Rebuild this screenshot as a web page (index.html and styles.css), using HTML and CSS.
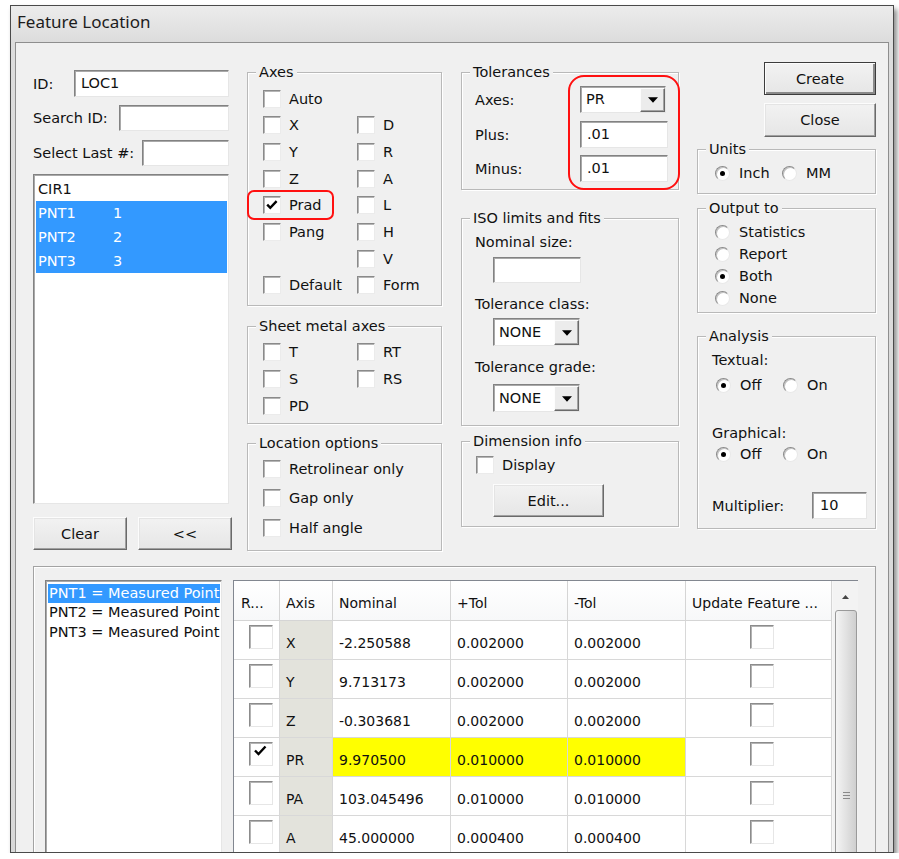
FILE: index.html
```html
<!DOCTYPE html>
<html>
<head>
<meta charset="utf-8">
<title>Feature Location</title>
<link rel="stylesheet" href="styles.css">
</head>
<body>
<div class="window">
  <div class="titlebar">Feature Location</div>
  <div class="client">
    <div class="top">
      <!-- ID / search / feature list -->
      <div class="col col-left">
        <div class="frow r1"><span class="lbl">ID:</span><span class="edit w-id">LOC1</span></div>
        <div class="frow r2"><span class="lbl">Search ID:</span><span class="edit w-search"></span></div>
        <div class="frow r3"><span class="lbl">Select Last #:</span><span class="edit w-last"></span></div>
        <div class="listbox feat-list">
          <div class="li"><span class="li-name">CIR1</span></div>
          <div class="li sel"><span class="li-name">PNT1</span><span>1</span></div>
          <div class="li sel"><span class="li-name">PNT2</span><span>2</span></div>
          <div class="li sel"><span class="li-name">PNT3</span><span>3</span></div>
        </div>
        <div class="btnrow">
          <button class="btn w-half">Clear</button>
          <button class="btn w-half">&lt;&lt;</button>
        </div>
      </div>

      <!-- axis selection -->
      <div class="col col-axes">
        <div class="group g-axes">
          <div class="gtitle">Axes</div>
          <div class="cbgrid rows-axes">
            <label class="cbi"><span class="cb"></span>Auto</label><span></span>
            <label class="cbi"><span class="cb"></span>X</label><label class="cbi"><span class="cb"></span>D</label>
            <label class="cbi"><span class="cb"></span>Y</label><label class="cbi"><span class="cb"></span>R</label>
            <label class="cbi"><span class="cb"></span>Z</label><label class="cbi"><span class="cb"></span>A</label>
            <label class="cbi"><span class="cb"><svg viewBox="0 0 16 16" class="tick"><path d="M3.2 7.6 L6.3 10.8 L12.6 4.2"/></svg></span>Prad</label><label class="cbi"><span class="cb"></span>L</label>
            <label class="cbi"><span class="cb"></span>Pang</label><label class="cbi"><span class="cb"></span>H</label>
            <span></span><label class="cbi"><span class="cb"></span>V</label>
            <label class="cbi"><span class="cb"></span>Default</label><label class="cbi"><span class="cb"></span>Form</label>
          </div>
        </div>
        <div class="group g-sheet">
          <div class="gtitle">Sheet metal axes</div>
          <div class="cbgrid rows-sheet">
            <label class="cbi"><span class="cb"></span>T</label><label class="cbi"><span class="cb"></span>RT</label>
            <label class="cbi"><span class="cb"></span>S</label><label class="cbi"><span class="cb"></span>RS</label>
            <label class="cbi"><span class="cb"></span>PD</label><span></span>
          </div>
        </div>
        <div class="group g-loc">
          <div class="gtitle">Location options</div>
          <div class="cblist rows-loc">
            <label class="cbi"><span class="cb"></span>Retrolinear only</label>
            <label class="cbi"><span class="cb"></span>Gap only</label>
            <label class="cbi"><span class="cb"></span>Half angle</label>
          </div>
        </div>
      </div>

      <!-- tolerances -->
      <div class="col col-tol">
        <div class="group g-tol">
          <div class="gtitle">Tolerances</div>
          <div class="tolrow t1"><span class="tlbl">Axes:</span><span class="combo w-axcombo"><span class="combo-val">PR</span><span class="combo-btn"><svg viewBox="0 0 9 5" class="arrow"><path d="M0 0 H9 L4.5 5 Z"/></svg></span></span></div>
          <div class="tolrow t2"><span class="tlbl">Plus:</span><span class="edit w-tol">.01</span></div>
          <div class="tolrow t3"><span class="tlbl">Minus:</span><span class="edit w-tol">.01</span></div>
        </div>
        <div class="group g-iso">
          <div class="gtitle">ISO limits and fits</div>
          <div class="iso-lbl l1">Nominal size:</div>
          <span class="edit w-nom"></span>
          <div class="iso-lbl l2">Tolerance class:</div>
          <span class="combo w-none c1"><span class="combo-val">NONE</span><span class="combo-btn"><svg viewBox="0 0 9 5" class="arrow"><path d="M0 0 H9 L4.5 5 Z"/></svg></span></span>
          <div class="iso-lbl l3">Tolerance grade:</div>
          <span class="combo w-none c2"><span class="combo-val">NONE</span><span class="combo-btn"><svg viewBox="0 0 9 5" class="arrow"><path d="M0 0 H9 L4.5 5 Z"/></svg></span></span>
        </div>
        <div class="group g-dim">
          <div class="gtitle">Dimension info</div>
          <label class="cbi dim-cb"><span class="cb"></span>Display</label>
          <button class="btn w-edit">Edit...</button>
        </div>
      </div>

      <!-- actions and output options -->
      <div class="col col-right">
        <button class="btn btn-default w-act">Create</button>
        <button class="btn w-act close">Close</button>
        <div class="group g-units">
          <div class="gtitle">Units</div>
          <div class="radrow units-row">
            <label class="rdi w-inch"><span class="rd on"></span>Inch</label>
            <label class="rdi"><span class="rd"></span>MM</label>
          </div>
        </div>
        <div class="group g-out">
          <div class="gtitle">Output to</div>
          <div class="radlist">
            <label class="rdi"><span class="rd"></span>Statistics</label>
            <label class="rdi"><span class="rd"></span>Report</label>
            <label class="rdi"><span class="rd on"></span>Both</label>
            <label class="rdi"><span class="rd"></span>None</label>
          </div>
        </div>
        <div class="group g-ana">
          <div class="gtitle">Analysis</div>
          <div class="ana-lbl a1">Textual:</div>
          <div class="radrow ana-row r-text">
            <label class="rdi w-off"><span class="rd on"></span>Off</label>
            <label class="rdi"><span class="rd"></span>On</label>
          </div>
          <div class="ana-lbl a2">Graphical:</div>
          <div class="radrow ana-row r-graph">
            <label class="rdi w-off"><span class="rd on"></span>Off</label>
            <label class="rdi"><span class="rd"></span>On</label>
          </div>
          <div class="mult-row"><span class="mult-lbl">Multiplier:</span><span class="edit w-mult">10</span></div>
        </div>
      </div>
    </div>

    <!-- per-point axis table -->
    <div class="panel">
      <div class="listbox pt-list">
        <div class="pli sel">PNT1 = Measured Point</div>
        <div class="pli">PNT2 = Measured Point</div>
        <div class="pli">PNT3 = Measured Point</div>
      </div>
      <div class="grid">
        <table class="axtable">
          <colgroup>
            <col class="c-r"><col class="c-axis"><col class="c-nom"><col class="c-ptol"><col class="c-mtol"><col class="c-upd">
          </colgroup>
          <thead>
            <tr><th>R...</th><th>Axis</th><th>Nominal</th><th>+Tol</th><th>-Tol</th><th>Update Feature ...</th></tr>
          </thead>
          <tbody>
            <tr><td class="rc"><span class="gcb"></span></td><td class="ax">X</td><td>-2.250588</td><td>0.002000</td><td>0.002000</td><td class="uc"><span class="gcb"></span></td></tr>
            <tr><td class="rc"><span class="gcb"></span></td><td class="ax">Y</td><td>9.713173</td><td>0.002000</td><td>0.002000</td><td class="uc"><span class="gcb"></span></td></tr>
            <tr><td class="rc"><span class="gcb"></span></td><td class="ax">Z</td><td>-0.303681</td><td>0.002000</td><td>0.002000</td><td class="uc"><span class="gcb"></span></td></tr>
            <tr><td class="rc"><span class="gcb"><svg viewBox="0 0 22 22" class="gtick"><path d="M5 7.5 L8.5 11 L15.5 3.5"/></svg></span></td><td class="ax">PR</td><td class="hl">9.970500</td><td class="hl">0.010000</td><td class="hl">0.010000</td><td class="uc"><span class="gcb"></span></td></tr>
            <tr><td class="rc"><span class="gcb"></span></td><td class="ax">PA</td><td>103.045496</td><td>0.010000</td><td>0.010000</td><td class="uc"><span class="gcb"></span></td></tr>
            <tr><td class="rc"><span class="gcb"></span></td><td class="ax">A</td><td>45.000000</td><td>0.000400</td><td>0.000400</td><td class="uc"><span class="gcb"></span></td></tr>
          </tbody>
        </table>
        <div class="vscroll">
          <div class="sb-up"><svg viewBox="0 0 7 4" class="sb-arrow"><path d="M0 4 L3.5 0 L7 4 Z"/></svg></div>
          <div class="sb-thumb"><span class="grip"></span><span class="grip"></span><span class="grip"></span></div>
        </div>
      </div>
    </div>

    <!-- red highlight outlines -->
    <div class="mark mark-prad"></div>
    <div class="mark mark-tol"></div>
  </div>
</div>
</body>
</html>
```

FILE: styles.css
```css
* { box-sizing: border-box; }

body {
  margin: 0;
  background: #fff;
  font-family: "DejaVu Sans", sans-serif;
  font-size: 14.5px;
  color: #111;
}

/* window chrome */
.window {
  margin: 5px 0 0 10px;
  width: 884px;
  height: 848px;
  padding: 0 4px;
  border: 1px solid #4a4a4a;
  background: linear-gradient(#ececec, #dcdcdc 36px, #d8d8d8);
  overflow: hidden;
  box-shadow: 3px 4px 5px rgba(0, 0, 0, 0.45);
}

.titlebar {
  height: 36px;
  padding: 4px 0 0 2px;
  font: 17px/24px "Noto Sans", sans-serif;
  color: #1c1c1c;
}

.client {
  position: relative;
  height: 900px;
  padding: 19px 0 0 17px;
  border: 1px solid #8e8e8e;
  background: #f0f0f0;
}

.top { display: flex; align-items: flex-start; }

.col-left  { width: 199px; margin: 8px 15px 0 0; }
.col-axes  { width: 195px; margin: 10px 19px 0 0; }
.col-tol   { width: 218px; margin: 10px 18px 0 0; }
.col-right { width: 179px; }

/* common controls */
.edit {
  display: block;
  height: 26px;
  padding: 0 0 0 6px;
  background: #fff;
  border: 1px solid;
  border-color: #828282 #e6e6e6 #e6e6e6 #828282;
  box-shadow: inset 1px 1px 0 #a9a9a9;
  line-height: 24px;
  white-space: nowrap;
}

.btn {
  display: block;
  height: 33px;
  padding: 0;
  font: inherit;
  color: #111;
  background: linear-gradient(#f2f2f2, #e6e6e6);
  border: 1px solid;
  border-color: #fcfcfc #6a6a6a #6a6a6a #fcfcfc;
  box-shadow: inset -1px -1px 0 #a0a0a0, inset 1px 1px 0 #e4e4e4;
}

.btn-default {
  border-color: #3c3c3c;
  box-shadow: inset 1px 1px 0 #fcfcfc, inset -2px -2px 0 #8a8a8a;
}

.combo {
  display: flex;
  height: 27px;
  background: #fff;
  border: 1px solid;
  border-color: #828282 #e6e6e6 #e6e6e6 #828282;
  box-shadow: inset 1px 1px 0 #a9a9a9;
}
.combo-val { flex: 1; padding-left: 5px; line-height: 25px; }
.combo-btn {
  width: 25px;
  margin: 1px 0 0 0;
  display: flex;
  align-items: center;
  justify-content: center;
  background: #ececec;
  border: 1px solid;
  border-color: #fdfdfd #6a6a6a #6a6a6a #fdfdfd;
  box-shadow: inset -1px -1px 0 #a3a3a3;
}
.arrow { width: 10px; height: 6px; fill: #000; }

.cb {
  flex: none;
  width: 18px;
  height: 18px;
  background: #fff;
  border: 1px solid;
  border-color: #8a8a8a #ebebeb #ebebeb #8a8a8a;
  box-shadow: inset 1px 1px 0 #b5b5b5;
  display: flex;
  align-items: center;
  justify-content: center;
}
.tick { width: 16px; height: 16px; fill: none; stroke: #000; stroke-width: 2.4; }

.cbi { display: flex; align-items: center; gap: 8px; white-space: nowrap; }

.rd {
  flex: none;
  position: relative;
  width: 15px;
  height: 15px;
  border-radius: 50%;
  background: #fff;
  border: 1px solid;
  border-color: #8a8a8a #e9e9e9 #e9e9e9 #8a8a8a;
  box-shadow: inset 1px 1px 0 #c2c2c2;
}
.rd.on::after {
  content: "";
  position: absolute;
  left: 4px;
  top: 4px;
  width: 5px;
  height: 5px;
  border-radius: 50%;
  background: #000;
}
.rdi { display: flex; align-items: center; gap: 9px; height: 18px; white-space: nowrap; }

/* group boxes: the caption sits on the top edge, 8px in from the left border */
.group {
  --pl: 0px;
  padding-left: var(--pl);
  border: 1px solid #b9b9b9;
  box-shadow: inset 1px 1px 0 #fff, 1px 1px 0 #fff;
}
.gtitle {
  width: fit-content;
  margin: -9px 0 0 calc(8px - var(--pl));
  padding: 0 3px;
  line-height: 17px;
  background: #f0f0f0;
}

/* left column */
.frow { display: flex; align-items: center; width: 196px; }
.frow .lbl { flex: 1; }
.r1 { height: 27px; }
.r1 .edit { height: 27px; line-height: 25px; }
.r2 { margin-top: 8px; }
.r3 { margin-top: 9px; }
.w-id { width: 155px; }
.w-search { width: 110px; }
.w-last { width: 87px; }

.listbox {
  background: #fff;
  border: 1px solid;
  border-color: #828282 #e6e6e6 #e6e6e6 #828282;
  box-shadow: inset 1px 1px 0 #a9a9a9;
  overflow: hidden;
}
.feat-list { margin-top: 8px; width: 196px; height: 330px; padding: 2px 1px 0 2px; }
.li { display: flex; height: 24px; line-height: 24px; padding-left: 2px; }
.li-name { width: 75px; }
.li.sel { background: #3399ff; color: #fff; }

.btnrow { display: flex; gap: 11px; margin-top: 13px; }
.w-half { width: 94px; }

/* axes column */
.cbgrid { display: grid; grid-template-columns: 94px 1fr; grid-auto-rows: 26.7px; padding-left: 15px; }
.cbgrid .cbi, .cblist .cbi { height: 100%; }
.rows-axes { padding-top: 4.3px; padding-bottom: 6px; }
.g-sheet { margin-top: 20px; }
.rows-sheet { padding-top: 4.3px; padding-bottom: 3.5px; }
.g-loc { margin-top: 19px; }
.cblist { display: grid; grid-auto-rows: 29.5px; padding: 2.3px 0 7.2px 15px; }

/* tolerances column */
.g-tol { --pl: 13px; padding-bottom: 7px; }
.tolrow { display: flex; align-items: center; }
.t1 { margin-top: 5px; }
.t2 { margin-top: 8px; }
.t3 { margin-top: 7px; }
.tlbl { width: 105px; }
.w-axcombo { width: 86px; }
.w-tol { width: 88px; height: 27px; line-height: 25px; }

.g-iso { --pl: 13px; margin-top: 28px; padding-bottom: 13px; }
.iso-lbl { line-height: 17px; }
.l1 { margin-top: 6.5px; }
.l2, .l3 { margin-top: 12.5px; }
.w-nom { width: 88px; margin: 6.5px 0 0 18px; }
.w-none { width: 87px; height: 28px; margin-left: 18px; }
.w-none .combo-val { line-height: 26px; }
.c1 { margin-top: 5.5px; }
.c2 { margin-top: 8.5px; }

.g-dim { --pl: 14px; margin-top: 15px; padding-bottom: 9px; }
.dim-cb { height: 18px; margin-top: 6px; }
.w-edit { width: 111px; margin: 10px 0 0 17px; }

/* right column */
.w-act { width: 112px; margin-left: 67px; }
.close { margin-top: 8px; height: 34px; }

.g-units { --pl: 17px; margin-top: 12px; padding-bottom: 11px; }
.units-row { margin-top: 6px; }
.radrow { display: flex; }
.w-inch { width: 67px; }

.g-out { --pl: 17px; margin-top: 14px; padding-bottom: 3px; }
.radlist { display: grid; grid-auto-rows: 22px; align-items: center; margin-top: 4px; }

.g-ana { --pl: 14px; margin-top: 23px; padding-bottom: 9px; }
.ana-lbl { line-height: 17px; }
.a1 { margin-top: 6.5px; }
.a2 { margin-top: 30.5px; }
.ana-row { padding-left: 4px; }
.r-text { margin-top: 7.5px; }
.r-graph { margin-top: 3.5px; }
.w-off { width: 67px; }
.mult-row { display: flex; align-items: center; margin-top: 29px; }
.mult-lbl { width: 100px; }
.w-mult { width: 55px; height: 27px; line-height: 25px; padding-left: 7px; }

/* lower panel */
.panel {
  display: flex;
  align-items: flex-start;
  gap: 11px;
  width: 843px;
  height: 320px;
  margin-top: 15px;
  padding: 13px 0 0 11px;
  border: 1px solid #a3a3a3;
  box-shadow: inset 1px 1px 0 #fff;
}

.pt-list { width: 177px; height: 300px; padding: 2px 1px 0 2px; }
.pli { height: 20px; line-height: 20px; padding-left: 1px; white-space: nowrap; }
.pli.sel { background: #3399ff; color: #fff; height: 19px; margin-top: 1px; line-height: 18px; }
.pli.sel + .pli { margin-top: -1px; }

.grid {
  display: flex;
  align-items: flex-start;
  border-left: 1px solid #828790;
  border-top: 1px solid #828790;
  background: #fff;
}

.axtable {
  width: 598px;
  table-layout: fixed;
  border-collapse: separate;
  border-spacing: 0;
  font-size: 14px;
}
.c-r { width: 46px; }
.c-axis { width: 53px; }
.c-nom { width: 118px; }
.c-ptol { width: 117px; }
.c-mtol { width: 118px; }
.c-upd { width: 146px; }

.axtable th {
  height: 40px;
  padding: 6px 0 0 6px;
  text-align: left;
  font-weight: normal;
  white-space: nowrap;
  overflow: hidden;
  background: linear-gradient(#fff, #f7f8f9);
  border-right: 1px solid #d5d5d5;
  border-bottom: 1px solid #d5d5d5;
}
.axtable th:first-child { padding-left: 7px; }
.axtable td {
  height: 39px;
  padding: 6px 0 0 6px;
  white-space: nowrap;
  border-right: 1px solid #d8d8d8;
  border-bottom: 1px solid #d8d8d8;
}
.axtable td.ax { background: #e3e3dc; }
.axtable td.hl { background: #ffff00; }
.axtable td.rc { padding: 0 0 0 15px; vertical-align: top; }
.axtable td.uc { padding: 0 0 0 64px; vertical-align: top; }

.gcb {
  display: block;
  width: 24px;
  height: 24px;
  margin-top: 4px;
  background: #fff;
  border: 1px solid;
  border-color: #8c8c8c #e6e6e6 #e6e6e6 #8c8c8c;
  box-shadow: inset 1px 1px 0 #b3b3b3;
}
.gtick { display: block; width: 22px; height: 22px; fill: none; stroke: #000; stroke-width: 2.4; }

.vscroll {
  width: 26px;
  height: 290px;
  background: #f3f3f3;
  border-left: 1px solid #f7f7f7;
}
.sb-up { height: 29px; display: flex; justify-content: center; padding-top: 14px; }
.sb-arrow { width: 7px; height: 4px; fill: #444; }
.sb-thumb {
  margin: 0 1px 0 2px;
  height: 260px;
  padding-top: 181px;
  border: 1px solid #9a9a9a;
  border-radius: 3px;
  background: linear-gradient(90deg, #f4f4f4, #e2e2e2 50%, #cfcfcf);
  display: flex;
  flex-direction: column;
  align-items: center;
  gap: 2px;
}
.grip { display: block; width: 7px; height: 1px; background: #8a8a8a; }

/* red callout outlines */
.mark {
  position: absolute;
  border: 2px solid #ff1010;
}
.mark-prad { left: 231px; top: 147px; width: 87px; height: 30px; border-radius: 7px; }
.mark-tol { left: 552px; top: 32px; width: 112px; height: 115px; border-radius: 16px; }
```
